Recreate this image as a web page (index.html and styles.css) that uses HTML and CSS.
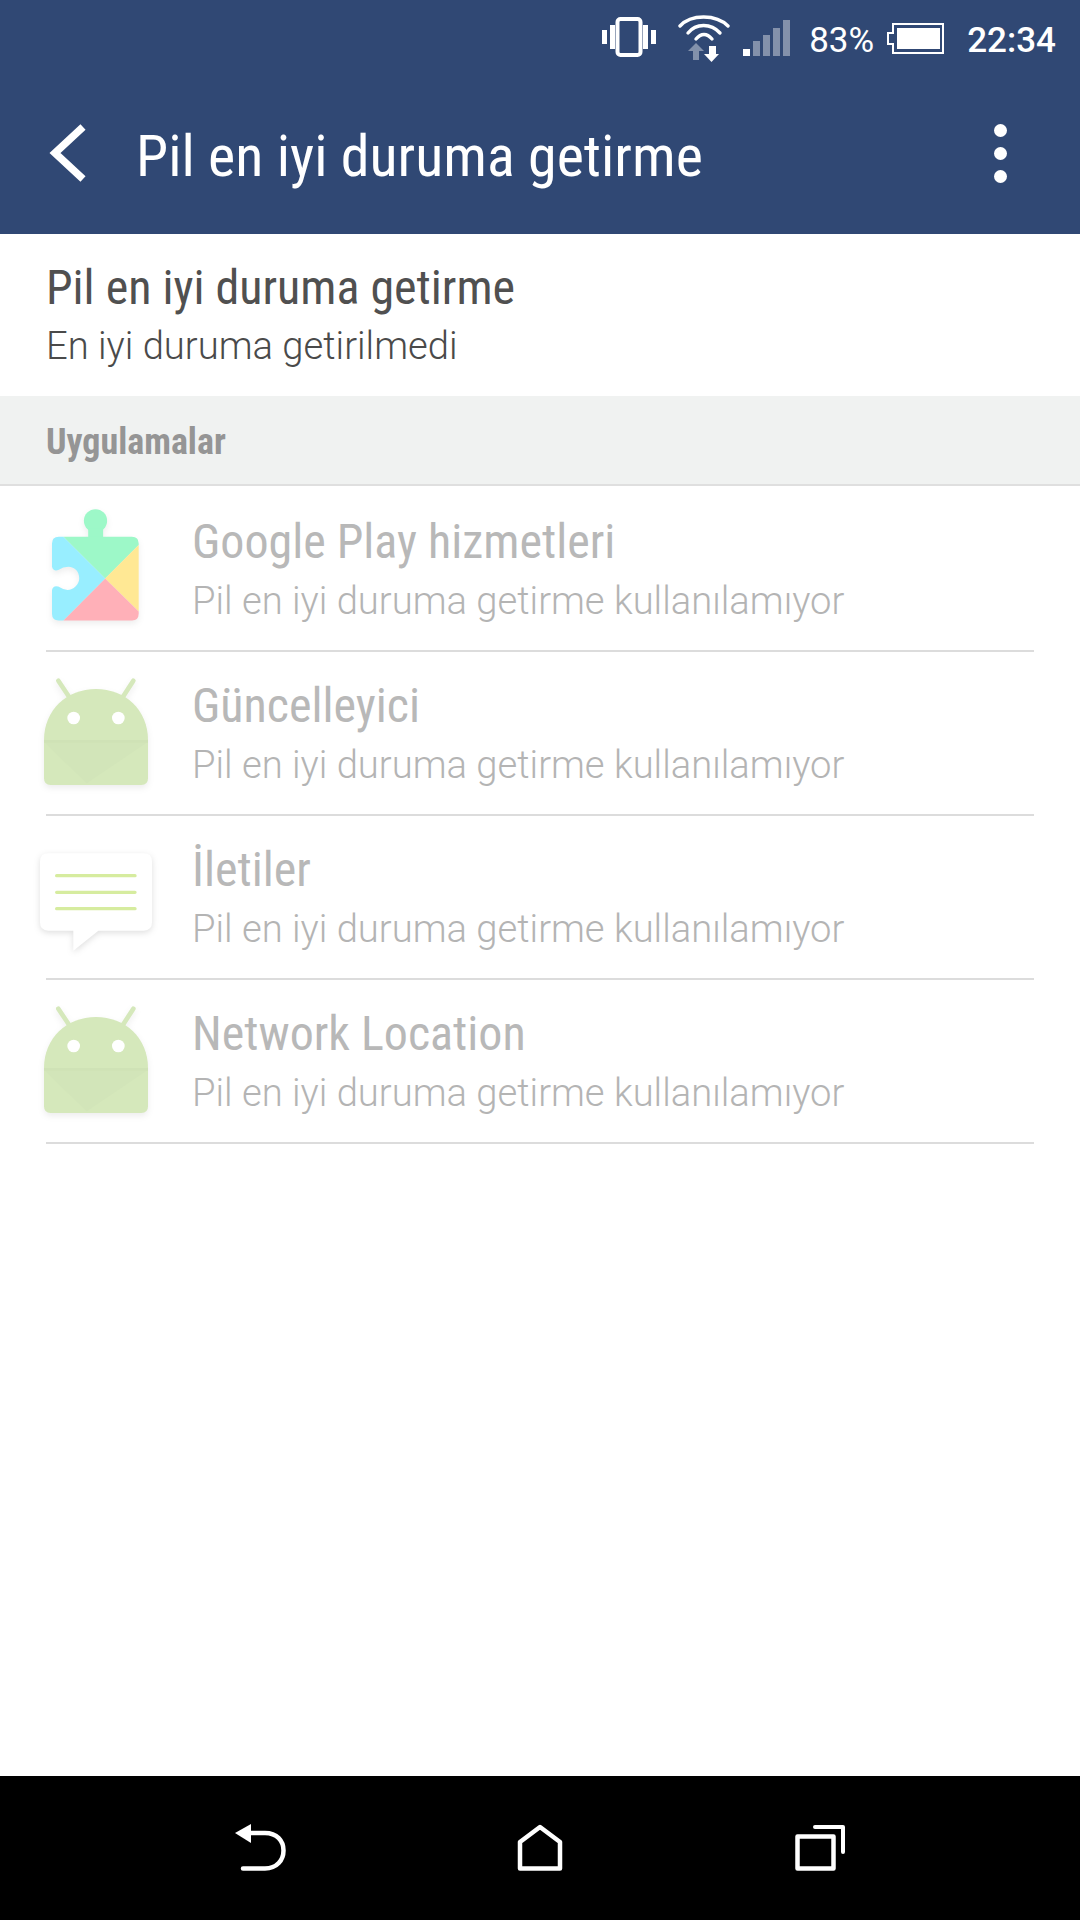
FILE: index.html
```html
<!DOCTYPE html>
<html lang="tr">
<head>
    <meta charset="UTF-8">
    <title>Pil en iyi duruma getirme</title>
    <link rel="stylesheet" href="styles.css">
</head>
<body>
<div id="screen">
    <div class="header">
        <div class="status">
            <svg class="ic-vibrate" width="54" height="40" viewBox="0 0 54 40">
                <rect x="15.500" y="2" width="23" height="36" rx="3" fill="none" stroke="#fff" stroke-width="4"/>
                <rect x="0" y="13" width="5" height="14" fill="#fff"/>
                <rect x="8" y="8" width="5" height="24" fill="#fff"/>
                <rect x="41" y="8" width="5" height="24" fill="#fff"/>
                <rect x="49" y="13" width="5" height="14" fill="#fff"/>
            </svg>
            <svg class="ic-wifi" width="52" height="50" viewBox="0 0 52 50">
                <g fill="none" stroke="#fff" stroke-width="3.400" stroke-linecap="round">
                    <path d="M2 13C13 1 38 1 50 13"/>
                    <path d="M10 20C18 10 33 10 42 20"/>
                    <path d="M18 26C23 20 29 20 34 26"/>
                </g>
                <path d="M10 38L18 30L26 38H21V47H15V38Z" fill="#fff" opacity="0.4"/>
                <path d="M26 41H31V33H38V41H41L33.500 49Z" fill="#fff"/>
            </svg>
            <svg class="ic-signal" width="47" height="37" viewBox="0 0 47 37">
                <rect x="0" y="29" width="7" height="7" fill="#fff"/>
                <g fill="#fff" opacity="0.4">
                    <rect x="10" y="21" width="7" height="15"/>
                    <rect x="20" y="15" width="7" height="21"/>
                    <rect x="30" y="8" width="7" height="28"/>
                    <rect x="40" y="0" width="7" height="36"/>
                </g>
            </svg>
            <span class="pct">83%</span>
            <svg class="ic-batt" width="57" height="31" viewBox="0 0 57 31">
                <path d="M6 1H56V30H6V21H1V10H6Z" fill="none" stroke="#fff" stroke-width="2"/>
                <rect x="10" y="5" width="43" height="21" fill="#fff"/>
            </svg>
            <span class="clock">22:34</span>
        </div>
        <div class="appbar">
            <svg class="back" width="40" height="58" viewBox="0 0 40 58">
                <path d="M36 3L8 29L36 55" fill="none" stroke="#fff" stroke-width="7.500"/>
            </svg>
            <div class="bar-title">Pil en iyi duruma getirme</div>
            <div class="more"><i></i><i></i><i></i></div>
        </div>
    </div>

    <div class="top-item">
        <div class="name">Pil en iyi duruma getirme</div>
        <div class="desc">En iyi duruma getirilmedi</div>
    </div>

    <div class="section">Uygulamalar</div>

    <div class="list">
        <div class="row">
            <svg class="app puzzle" width="87" height="112" viewBox="96 57 262 336">
                <circle cx="227" cy="92" r="35" fill="#9df8c8"/>
                <path d="M205 115H250V145H205Z" fill="#9df8c8"/>
                <path d="M130 140H337Q357 140 357 160V165L256 266Z" fill="#9df8c8"/>
                <path d="M357 165V365L256 266Z" fill="#ffe894"/>
                <path d="M357 365V372Q357 392 337 392H130L256 266Z" fill="#ffb0b8"/>
                <path d="M130 140H116Q96 140 96 160V230Q100 245 115 240Q130 230 145 230C165 230 178 245 178 265C178 285 160 300 143 300Q130 300 115 290Q100 285 96 300V372Q96 392 116 392H130L256 266Z" fill="#98eeff"/>
            </svg>
            <div class="text">
                <div class="name">Google Play hizmetleri</div>
                <div class="desc">Pil en iyi duruma getirme kullanılamıyor</div>
            </div>
        </div>
        <div class="row">
            <svg class="app droid" width="112" height="115" viewBox="60 555 336 345">
                <path d="M115 572L148 622M340 572L308 622" stroke="#d5e8bb" stroke-width="14" stroke-linecap="round"/>
                <path d="M72 750C72 660 140 597 228 597C316 597 384 660 384 750V865Q384 885 364 885H92Q72 885 72 865Z" fill="#d5e8bb"/>
                <path d="M72 755H384L200 880Z" fill="#d2e5b9"/>
                <path d="M72 750H384V758H72Z" fill="#cfe2b6"/>
                <circle cx="161" cy="684" r="19" fill="#fff"/>
                <circle cx="295" cy="684" r="19" fill="#fff"/>
            </svg>
            <div class="text">
                <div class="name">Güncelleyici</div>
                <div class="desc">Pil en iyi duruma getirme kullanılamıyor</div>
            </div>
        </div>
        <div class="row">
            <svg class="app msg" width="125" height="110" viewBox="45 54 375 330">
                <path d="M85 70H371Q396 70 396 95V277Q396 302 371 302H235L160 362V302H85Q60 302 60 277V95Q60 70 85 70Z" fill="#fff"/>
                <path d="M110 137H345M110 187H345M110 236H345" stroke="#d6ec9f" stroke-width="10" stroke-linecap="round"/>
            </svg>
            <div class="text">
                <div class="name">İletiler</div>
                <div class="desc">Pil en iyi duruma getirme kullanılamıyor</div>
            </div>
        </div>
        <div class="row">
            <svg class="app droid" width="112" height="115" viewBox="60 555 336 345">
                <path d="M115 572L148 622M340 572L308 622" stroke="#d5e8bb" stroke-width="14" stroke-linecap="round"/>
                <path d="M72 750C72 660 140 597 228 597C316 597 384 660 384 750V865Q384 885 364 885H92Q72 885 72 865Z" fill="#d5e8bb"/>
                <path d="M72 755H384L200 880Z" fill="#d2e5b9"/>
                <path d="M72 750H384V758H72Z" fill="#cfe2b6"/>
                <circle cx="161" cy="684" r="19" fill="#fff"/>
                <circle cx="295" cy="684" r="19" fill="#fff"/>
            </svg>
            <div class="text">
                <div class="name">Network Location</div>
                <div class="desc">Pil en iyi duruma getirme kullanılamıyor</div>
            </div>
        </div>
    </div>

    <div class="navbar">
        <svg width="54" height="50" viewBox="0 0 54 50">
            <path d="M17 1V20L1 10Z" fill="#fff"/>
            <path d="M15 10H31C43 10 49.500 18 49.500 27.500C49.500 37 43 45.500 31 45.500H9" fill="none" stroke="#fff" stroke-width="4.500" stroke-linecap="round"/>
        </svg>
        <svg width="46" height="50" viewBox="0 0 46 50">
            <path d="M3 45.500V19L23 4L43 19V45.500Z" fill="none" stroke="#fff" stroke-width="4.500" stroke-linejoin="round"/>
        </svg>
        <svg width="54" height="50" viewBox="0 0 54 50">
            <rect x="5.500" y="13.500" width="36" height="32" fill="none" stroke="#fff" stroke-width="4.500" stroke-linejoin="round"/>
            <path d="M23 4H51V29" fill="none" stroke="#fff" stroke-width="4" stroke-linecap="round" stroke-linejoin="round"/>
        </svg>
    </div>
</div>
</body>
</html>
```

FILE: styles.css
```css
* {
    margin: 0;
    padding: 0;
    box-sizing: border-box;
}

body {
    width: 1080px;
    height: 1920px;
    overflow: hidden;
    background: #fff;
    font-family: Roboto, "Liberation Sans", sans-serif;
}

#screen {
    display: flex;
    flex-direction: column;
    height: 1920px;
}

.header {
    height: 234px;
    background: #304874;
    color: #fff;
}

.status {
    height: 76px;
    padding-right: 24px;
    display: flex;
    justify-content: flex-end;
    align-items: center;
}

.ic-vibrate {
    margin-right: 22px;
    margin-bottom: 2px;
}

.ic-wifi {
    margin-right: 13px;
}

.ic-signal {
    margin-right: 19px;
}

.pct {
    padding-top: 4px;
    font-size: 35px;
    margin-right: 13px;
}

.ic-batt {
    margin-right: 23px;
}

.clock {
    padding-top: 4px;
    font-size: 35px;
    font-weight: 500;
}

.appbar {
    height: 158px;
    padding-bottom: 4px;
    display: flex;
    align-items: center;
}

.back {
    margin-left: 47px;
    margin-right: 49px;
}

.bar-title {
    flex: 1;
    padding-top: 6px;
    font-size: 58px;
    font-stretch: condensed;
    white-space: nowrap;
}

.more {
    margin-right: 73px;
    display: flex;
    flex-direction: column;
    gap: 10px;
}

.more i {
    display: block;
    width: 13px;
    height: 13px;
    border-radius: 50%;
    background: #fff;
}

.top-item {
    height: 162px;
    padding: 27px 46px 0;
}

.name {
    font-size: 48px;
    line-height: 54px;
    font-stretch: condensed;
    color: #505050;
    white-space: nowrap;
}

.desc {
    margin-top: 6px;
    font-size: 38.200px;
    line-height: 50px;
    font-weight: 300;
    color: #4a4a4a;
    white-space: nowrap;
}

.section {
    height: 90px;
    padding-left: 46px;
    background: #f0f2f1;
    border-bottom: 2px solid #dfdfdf;
    font-size: 36px;
    font-weight: 700;
    font-stretch: condensed;
    line-height: 92px;
    color: #959595;
}

.list {
    flex: 1;
    padding-top: 2px;
}

.row {
    position: relative;
    height: 164px;
    margin: 0 46px;
    padding-top: 3px;
    padding-left: 146px;
    border-bottom: 2px solid #dcdcdc;
    display: flex;
    align-items: center;
}

.app {
    position: absolute;
    filter: drop-shadow(0 3px 3px rgba(0, 0, 0, 0.07));
}

.puzzle {
    left: 6px;
    top: 21px;
}

.droid {
    left: -6px;
    top: 23px;
}

.msg {
    left: -11px;
    top: 32px;
    filter: drop-shadow(0 2px 3px rgba(0, 0, 0, 0.13));
}

.row .name {
    color: #b8b8b8;
}

.row .desc {
    margin-top: 7px;
    color: #b4b4b4;
}

.navbar {
    height: 144px;
    background: #000;
    padding-left: 234px;
    padding-right: 234px;
    display: flex;
    justify-content: space-between;
    align-items: center;
}
```
